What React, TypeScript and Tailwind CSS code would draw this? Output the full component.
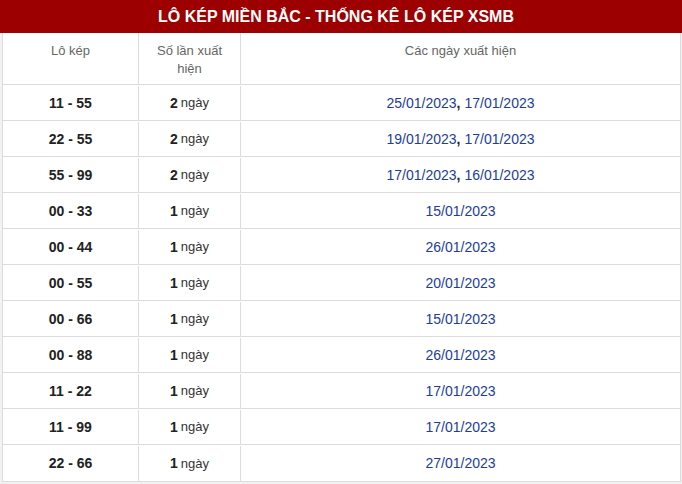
const rows: [string, number, string[]][] = [
  ['11 - 55', 2, ['25/01/2023', '17/01/2023']],
  ['22 - 55', 2, ['19/01/2023', '17/01/2023']],
  ['55 - 99', 2, ['17/01/2023', '16/01/2023']],
  ['00 - 33', 1, ['15/01/2023']],
  ['00 - 44', 1, ['26/01/2023']],
  ['00 - 55', 1, ['20/01/2023']],
  ['00 - 66', 1, ['15/01/2023']],
  ['00 - 88', 1, ['26/01/2023']],
  ['11 - 22', 1, ['17/01/2023']],
  ['11 - 99', 1, ['17/01/2023']],
  ['22 - 66', 1, ['27/01/2023']],
]

const cols = 'grid grid-cols-[136px_102px_1fr]'

export default function App() {
  return (
    <div className="w-[682px] h-[484px] bg-[#f2f2f2] font-['Liberation_Sans',Arial,sans-serif] overflow-hidden">
      <div className="h-[33px] bg-[#9c0000] text-white font-bold text-[16px] flex items-center justify-center pr-[10px]">
        LÔ KÉP MIỀN BẮC - THỐNG KÊ LÔ KÉP XSMB
      </div>
      <div className="ml-[2px] mr-[1px] bg-white border-l border-r border-b border-[#dcdcdc]">
        <div className={`${cols} h-[52px] border-b border-[#dcdcdc] text-[13px] text-[#666] leading-[18px]`}>
          <div className="flex justify-center pt-[9px] border-r border-[#dcdcdc]">Lô kép</div>
          <div className="text-center pt-[9px] px-[10px] border-r border-[#dcdcdc]">Số lần xuất hiện</div>
          <div className="flex justify-center pt-[9px]">Các ngày xuất hiện</div>
        </div>
        {rows.map(([pair, n, dates], i) => (
          <div
            key={pair}
            className={`${cols} h-[36px] pt-[1px] ${i < rows.length - 1 ? 'border-b border-[#dcdcdc]' : ''}`}
          >
            <div className="flex items-center justify-center border-r border-[#dcdcdc] font-bold text-[14px] text-[#222]">
              {pair}
            </div>
            <div className="flex items-center justify-center border-r border-[#dcdcdc] text-[13px] text-[#333]">
              <span className="font-bold text-[14px] text-[#222] mr-[3px]">{n}</span>ngày
            </div>
            <div className="flex items-center justify-center text-[14px] text-[#213c9c]">
              {dates.map((d, j) => (
                <span key={j}>
                  {j > 0 && <b className="text-[#222] mr-[4px]">,</b>}
                  {d}
                </span>
              ))}
            </div>
          </div>
        ))}
      </div>
    </div>
  )
}
